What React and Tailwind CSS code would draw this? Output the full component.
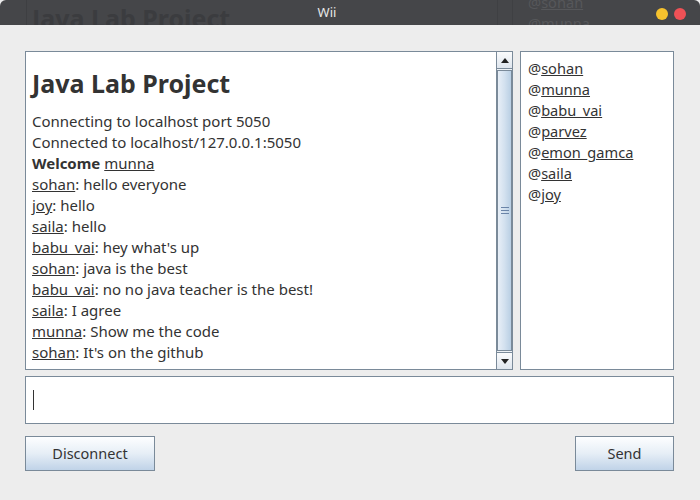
import React from "react";

const font = { fontFamily: '"Noto Sans", "Open Sans", sans-serif' };

const messages = [
  { user: "sohan", text: "hello everyone" },
  { user: "joy", text: "hello" },
  { user: "saila", text: "hello" },
  { user: "babu_vai", text: "hey what's up" },
  { user: "sohan", text: "java is the best" },
  { user: "babu_vai", text: "no no java teacher is the best!" },
  { user: "saila", text: "I agree" },
  { user: "munna", text: "Show me the code" },
  { user: "sohan", text: "It's on the github" },
];

const users = ["sohan", "munna", "babu_vai", "parvez", "emon_gamca", "saila", "joy"];

const ScrollArrow = ({ up }) => (
  <div className="h-[16px] flex items-center justify-center bg-gradient-to-b from-[#fafbfc] to-[#dfe6ee] border-[#7a8a99]">
    <svg width="8" height="5" viewBox="0 0 8 5">
      {up ? <polygon points="4,0 8,5 0,5" fill="#222" /> : <polygon points="0,0 8,0 4,5" fill="#222" />}
    </svg>
  </div>
);

const Scrollbar = () => (
  <div className="w-[16px] flex flex-col border-l border-[#7a8a99] bg-[#eef2f6]">
    <div className="border-b border-[#7a8a99]">
      <ScrollArrow up />
    </div>
    <div className="flex-1 mt-[1px] mb-[1px] flex items-center justify-center border border-[#7a8a99] bg-gradient-to-r from-[#e8eff7] via-[#d3e1ef] to-[#b9cfe4]">
      <div className="flex flex-col gap-[2px]">
        <div className="w-[8px] h-[1px] bg-[#6a84a8]" />
        <div className="w-[8px] h-[1px] bg-[#6a84a8]" />
        <div className="w-[8px] h-[1px] bg-[#6a84a8]" />
      </div>
    </div>
    <div className="border-t border-[#7a8a99]">
      <ScrollArrow />
    </div>
  </div>
);

const Button = ({ label, width }) => (
  <button
    className={`${width} h-[35px] border border-[#7a8a99] bg-gradient-to-b from-[#fdfeff] via-[#e6eef6] to-[#c0d3e8] text-[14.5px] text-[#333]`}
  >
    {label}
  </button>
);

export default function App() {
  return (
    <div className="w-[700px] h-[500px] bg-[#ededed] flex flex-col overflow-hidden" style={font}>
      {/* title bar */}
      <div className="relative h-[25px] bg-[#454649] rounded-t-[6px] overflow-hidden flex items-center justify-center pr-[46px]">
        <div className="absolute left-[26px] top-0 h-[25px] w-[1px] bg-[#3e3f42]" />
        <div className="absolute left-[32px] top-[3px] text-[25px] font-bold text-[#3b3c3f] leading-[30px] whitespace-nowrap">
          Java Lab Project
        </div>
        <div className="absolute left-[497px] top-0 h-[25px] w-[16px] border-x border-[#3f4043]" />
        <div className="absolute left-[528px] top-[-8px] text-[14.6px] leading-[21px] text-[#56575a] whitespace-nowrap">
          @<span className="underline">sohan</span>
          <br />
          @munna
        </div>
        <span className="relative text-[13px] text-[#e6e6e6]">Wii</span>
        <div className="absolute right-[14px] top-[8px] flex gap-[6px]">
          <div className="w-[12px] h-[12px] rounded-full bg-[#f6c22e]" />
          <div className="w-[12px] h-[12px] rounded-full bg-[#ef5156]" />
        </div>
      </div>

      {/* body */}
      <div className="flex-1 flex flex-col pt-[26px] pl-[25px] pr-[26px]">
        <div className="h-[319px] flex gap-[7px]">
          <div className="flex-1 flex border border-[#7a8a99] bg-white">
            <div className="flex-1 pl-[6px] pt-[15px] text-[15px] leading-[21px] text-[#333]">
              <div className="text-[25px] font-bold leading-[33px] mb-[11px]">Java Lab Project</div>
              <div>Connecting to localhost port 5050</div>
              <div>Connected to localhost/127.0.0.1:5050</div>
              <div>
                <b>Welcome</b> <span className="underline">munna</span>
              </div>
              {messages.map((m, i) => (
                <div key={i}>
                  <span className="underline">{m.user}</span>: {m.text}
                </div>
              ))}
            </div>
            <Scrollbar />
          </div>
          <div className="w-[154px] border border-[#7a8a99] bg-white pl-[7px] pt-[6px] text-[14.6px] leading-[21px] text-[#333]">
            {users.map((u) => (
              <div key={u}>
                @<span className="underline">{u}</span>
              </div>
            ))}
          </div>
        </div>

        <div className="mt-[6px] h-[48px] border border-[#7a8a99] bg-white flex items-center pl-[7px]">
          <div className="w-[1px] h-[20px] bg-[#333]" />
        </div>

        <div className="mt-[12px] flex justify-between">
          <Button label="Disconnect" width="w-[130px]" />
          <Button label="Send" width="w-[99px]" />
        </div>
      </div>
    </div>
  );
}
